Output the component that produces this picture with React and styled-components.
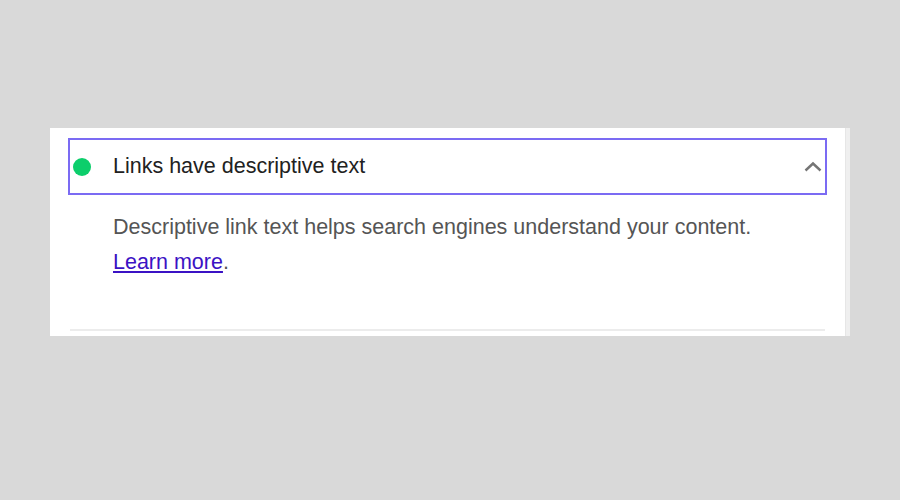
import React from "react";
import styled, { createGlobalStyle } from "styled-components";

const Global = createGlobalStyle`
  html, body { margin: 0; padding: 0; background: #d9d9d9; }
  body { font-family: "Liberation Sans", Arial, sans-serif; }
`;

const Page = styled.div`
  width: 900px;
  height: 500px;
  padding: 128px 0 0 50px;
  box-sizing: border-box;
`;

const Card = styled.div`
  display: flex;
  width: 800px;
  height: 208px;
`;

const Content = styled.div`
  flex: 1;
  background: #ffffff;
  padding: 12px 20px 0;
  display: flex;
  flex-direction: column;
`;

const Track = styled.div`
  width: 4px;
  background: #efefef;
  border-left: 1px solid #e6e6e6;
`;

const Header = styled.button`
  all: unset;
  box-sizing: border-box;
  display: flex;
  align-items: center;
  height: 53px;
  padding: 0 3px;
  outline: 2px solid #7b6bf3;
  cursor: pointer;
`;

const Dot = styled.span`
  width: 18px;
  height: 18px;
  border-radius: 50%;
  background: ${(p) => p.$color};
  flex: none;
`;

const Title = styled.span`
  flex: 1;
  margin-left: 22px;
  font-size: 21.5px;
  color: #212121;
  font-family: "Liberation Sans", Arial, sans-serif;
`;

const Body = styled.div`
  padding: 17px 0 0 43px;
  font-size: 21.5px;
  line-height: 35px;
  color: #555555;
  flex: 1;
`;

const Link = styled.a`
  color: #3b12c4;
  text-decoration: underline;
`;

const Divider = styled.div`
  height: 2px;
  background: #ececec;
  margin-bottom: 5px;
`;

const Chevron = () => (
  <svg width="19" height="11" viewBox="0 0 19 11" fill="none">
    <path d="M2.5 9.5 L10 2.5 L17.5 9.5" stroke="#757575" strokeWidth="2.4" />
  </svg>
);

export default function App() {
  return (
    <>
      <Global />
      <Page>
        <Card>
          <Content>
            <Header>
              <Dot $color="#0cce6b" />
              <Title>Links have descriptive text</Title>
              <Chevron />
            </Header>
            <Body>
              Descriptive link text helps search engines understand your content.
              <br />
              <Link href="#">Learn more</Link>.
            </Body>
            <Divider />
          </Content>
          <Track />
        </Card>
      </Page>
    </>
  );
}
